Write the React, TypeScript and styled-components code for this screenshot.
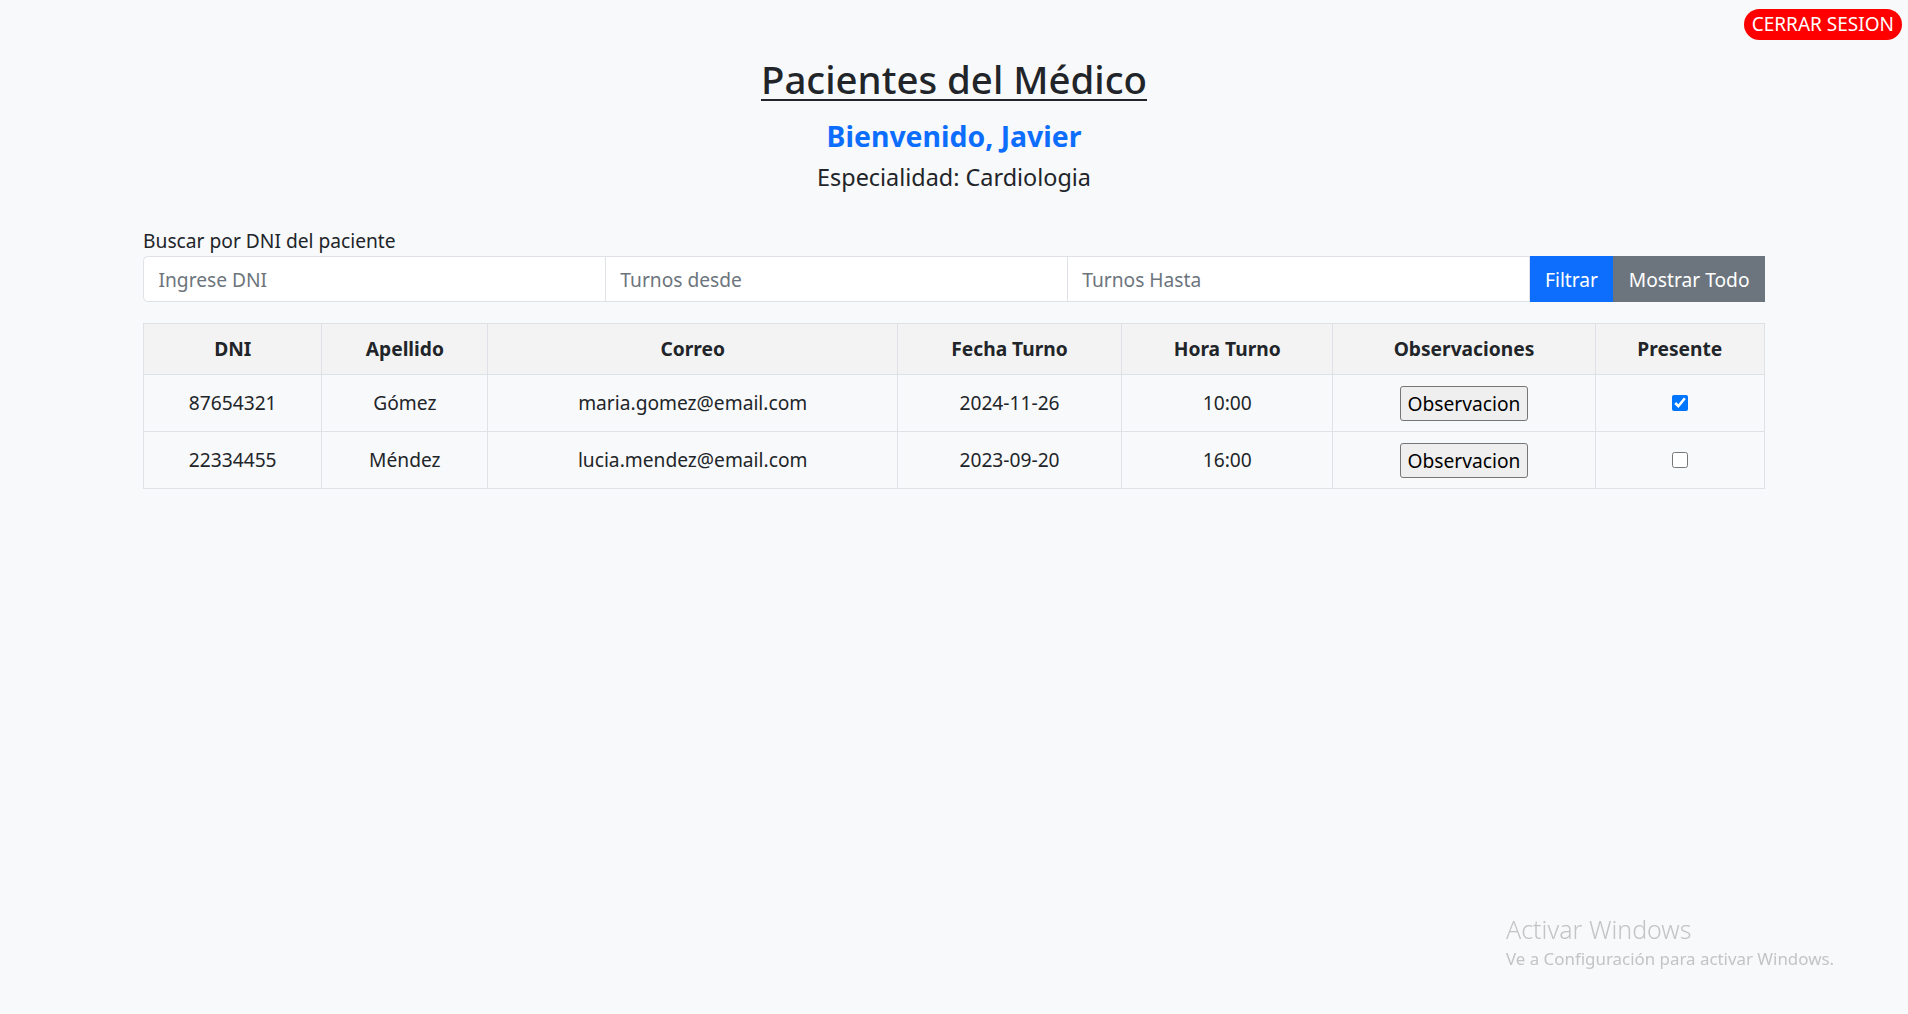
import styled, { createGlobalStyle } from "styled-components";

const GlobalStyle = createGlobalStyle`
  html, body {
    margin: 0;
    padding: 0;
  }
  body {
    background-color: #f8f9fa;
    color: #212529;
    font-family: "Noto Sans", "Open Sans", sans-serif;
    font-size: 19.2px;
    line-height: 1.5;
  }
  * {
    box-sizing: border-box;
  }
`;

type Patient = {
  dni: string;
  apellido: string;
  correo: string;
  fecha: string;
  hora: string;
  presente: boolean;
};

const patients: Patient[] = [
  {
    dni: "87654321",
    apellido: "Gómez",
    correo: "maria.gomez@email.com",
    fecha: "2024-11-26",
    hora: "10:00",
    presente: true,
  },
  {
    dni: "22334455",
    apellido: "Méndez",
    correo: "lucia.mendez@email.com",
    fecha: "2023-09-20",
    hora: "16:00",
    presente: false,
  },
];

const columns = [
  { label: "DNI", width: 178 },
  { label: "Apellido", width: 166 },
  { label: "Correo", width: 409 },
  { label: "Fecha Turno", width: 224 },
  { label: "Hora Turno", width: 211 },
  { label: "Observaciones", width: 262 },
  { label: "Presente", width: 169 },
];

function App() {
  return (
    <Page>
      <GlobalStyle />
      <TopBar>
        <LogoutButton>CERRAR SESION</LogoutButton>
      </TopBar>

      <Header>
        <Title>Pacientes del Médico</Title>
        <Welcome>Bienvenido, Javier</Welcome>
        <Specialty>Especialidad: Cardiologia</Specialty>
      </Header>

      <Container>
        <Label>Buscar por DNI del paciente</Label>
        <InputGroup>
          <Input placeholder="Ingrese DNI" $first />
          <Input placeholder="Turnos desde" />
          <Input placeholder="Turnos Hasta" />
          <GroupButton $variant="primary">Filtrar</GroupButton>
          <GroupButton $variant="secondary">Mostrar Todo</GroupButton>
        </InputGroup>

        <Table>
          <thead>
            <tr>
              {columns.map((col) => (
                <Th key={col.label} $w={col.width}>
                  {col.label}
                </Th>
              ))}
            </tr>
          </thead>
          <tbody>
            {patients.map((p) => (
              <tr key={p.dni}>
                <Td>{p.dni}</Td>
                <Td>{p.apellido}</Td>
                <Td>{p.correo}</Td>
                <Td>{p.fecha}</Td>
                <Td>{p.hora}</Td>
                <Td>
                  <ObsButton>Observacion</ObsButton>
                </Td>
                <Td>
                  <Check type="checkbox" defaultChecked={p.presente} />
                </Td>
              </tr>
            ))}
          </tbody>
        </Table>
      </Container>

      <Watermark>
        <WatermarkTitle>Activar Windows</WatermarkTitle>
        <WatermarkText>Ve a Configuración para activar Windows.</WatermarkText>
      </Watermark>
    </Page>
  );
}

const Page = styled.div`
  min-height: 100vh;
`;

const TopBar = styled.div`
  display: flex;
  justify-content: flex-end;
  padding: 9px 6px 0 0;
`;

const LogoutButton = styled.button`
  height: 31px;
  padding: 0 8px;
  border: none;
  border-radius: 999px;
  background-color: #ff0000;
  color: #ffffff;
  font-family: inherit;
  font-size: 19px;
  line-height: 31px;
  cursor: pointer;
`;

const Header = styled.header`
  text-align: center;
`;

const Title = styled.h2`
  margin: 16px 0 0;
  font-size: 38.4px;
  font-weight: 500;
  line-height: 1.2;
  text-decoration: underline;
  text-decoration-thickness: 2px;
  text-underline-offset: 5px;
`;

const Welcome = styled.h4`
  margin: 17px 0 0;
  font-size: 28.4px;
  font-weight: 700;
  line-height: 1.2;
  color: #0d6efd;
`;

const Specialty = styled.p`
  margin: 7px 0 0;
  font-size: 23.4px;
  line-height: 1.5;
`;

const Container = styled.main`
  width: 85%;
  margin: 32px auto 0;
`;

const Label = styled.label`
  display: block;
  font-size: 19.2px;
  line-height: 28.8px;
`;

const InputGroup = styled.div`
  display: flex;
  height: 46px;
`;

const Input = styled.input<{ $first?: boolean }>`
  flex: 1;
  min-width: 0;
  margin-left: ${(p) => (p.$first ? "0" : "-1px")};
  padding: 7px 14.4px;
  border: 1px solid #dee2e6;
  border-radius: ${(p) => (p.$first ? "4.5px 0 0 4.5px" : "0")};
  background-color: #ffffff;
  color: #212529;
  font-family: inherit;
  font-size: 19.2px;
  outline: none;

  &::placeholder {
    color: #6c757d;
  }
`;

const GroupButton = styled.button<{ $variant: "primary" | "secondary" }>`
  padding: 0 14.4px;
  border: 1px solid
    ${(p) => (p.$variant === "primary" ? "#0d6efd" : "#6c757d")};
  border-radius: 0;
  background-color: ${(p) =>
    p.$variant === "primary" ? "#0d6efd" : "#6c757d"};
  color: #ffffff;
  font-family: inherit;
  font-size: 19.2px;
  cursor: pointer;
`;

const Table = styled.table`
  width: 100%;
  margin-top: 21px;
  border-collapse: collapse;
  table-layout: fixed;
`;

const Th = styled.th<{ $w: number }>`
  width: ${(p) => p.$w}px;
  height: 51px;
  padding: 0 10px;
  border: 1px solid #dee2e6;
  background-color: #f3f3f3;
  font-weight: 700;
  text-align: center;
  vertical-align: middle;
`;

const Td = styled.td`
  height: 57px;
  padding: 0 10px;
  border: 1px solid #dee2e6;
  text-align: center;
  vertical-align: middle;
`;

const ObsButton = styled.button`
  height: 35px;
  padding: 0 7px;
  border: 1px solid #767676;
  border-radius: 3px;
  background-color: #efefef;
  color: #000000;
  font-family: inherit;
  font-size: 19.2px;
  line-height: 33px;
  vertical-align: middle;
  cursor: pointer;
`;

const Check = styled.input`
  width: 16px;
  height: 16px;
  margin: 0 0 4px;
  vertical-align: middle;
`;

const Watermark = styled.div`
  position: fixed;
  right: 52px;
  bottom: 44px;
  width: 350px;
  color: #c2c4c6;
  pointer-events: none;
`;

const WatermarkTitle = styled.div`
  font-size: 25px;
  font-weight: 300;
  line-height: 1.2;
`;

const WatermarkText = styled.div`
  margin-top: 4px;
  font-size: 16.9px;
  line-height: 1.3;
`;

export default App;
